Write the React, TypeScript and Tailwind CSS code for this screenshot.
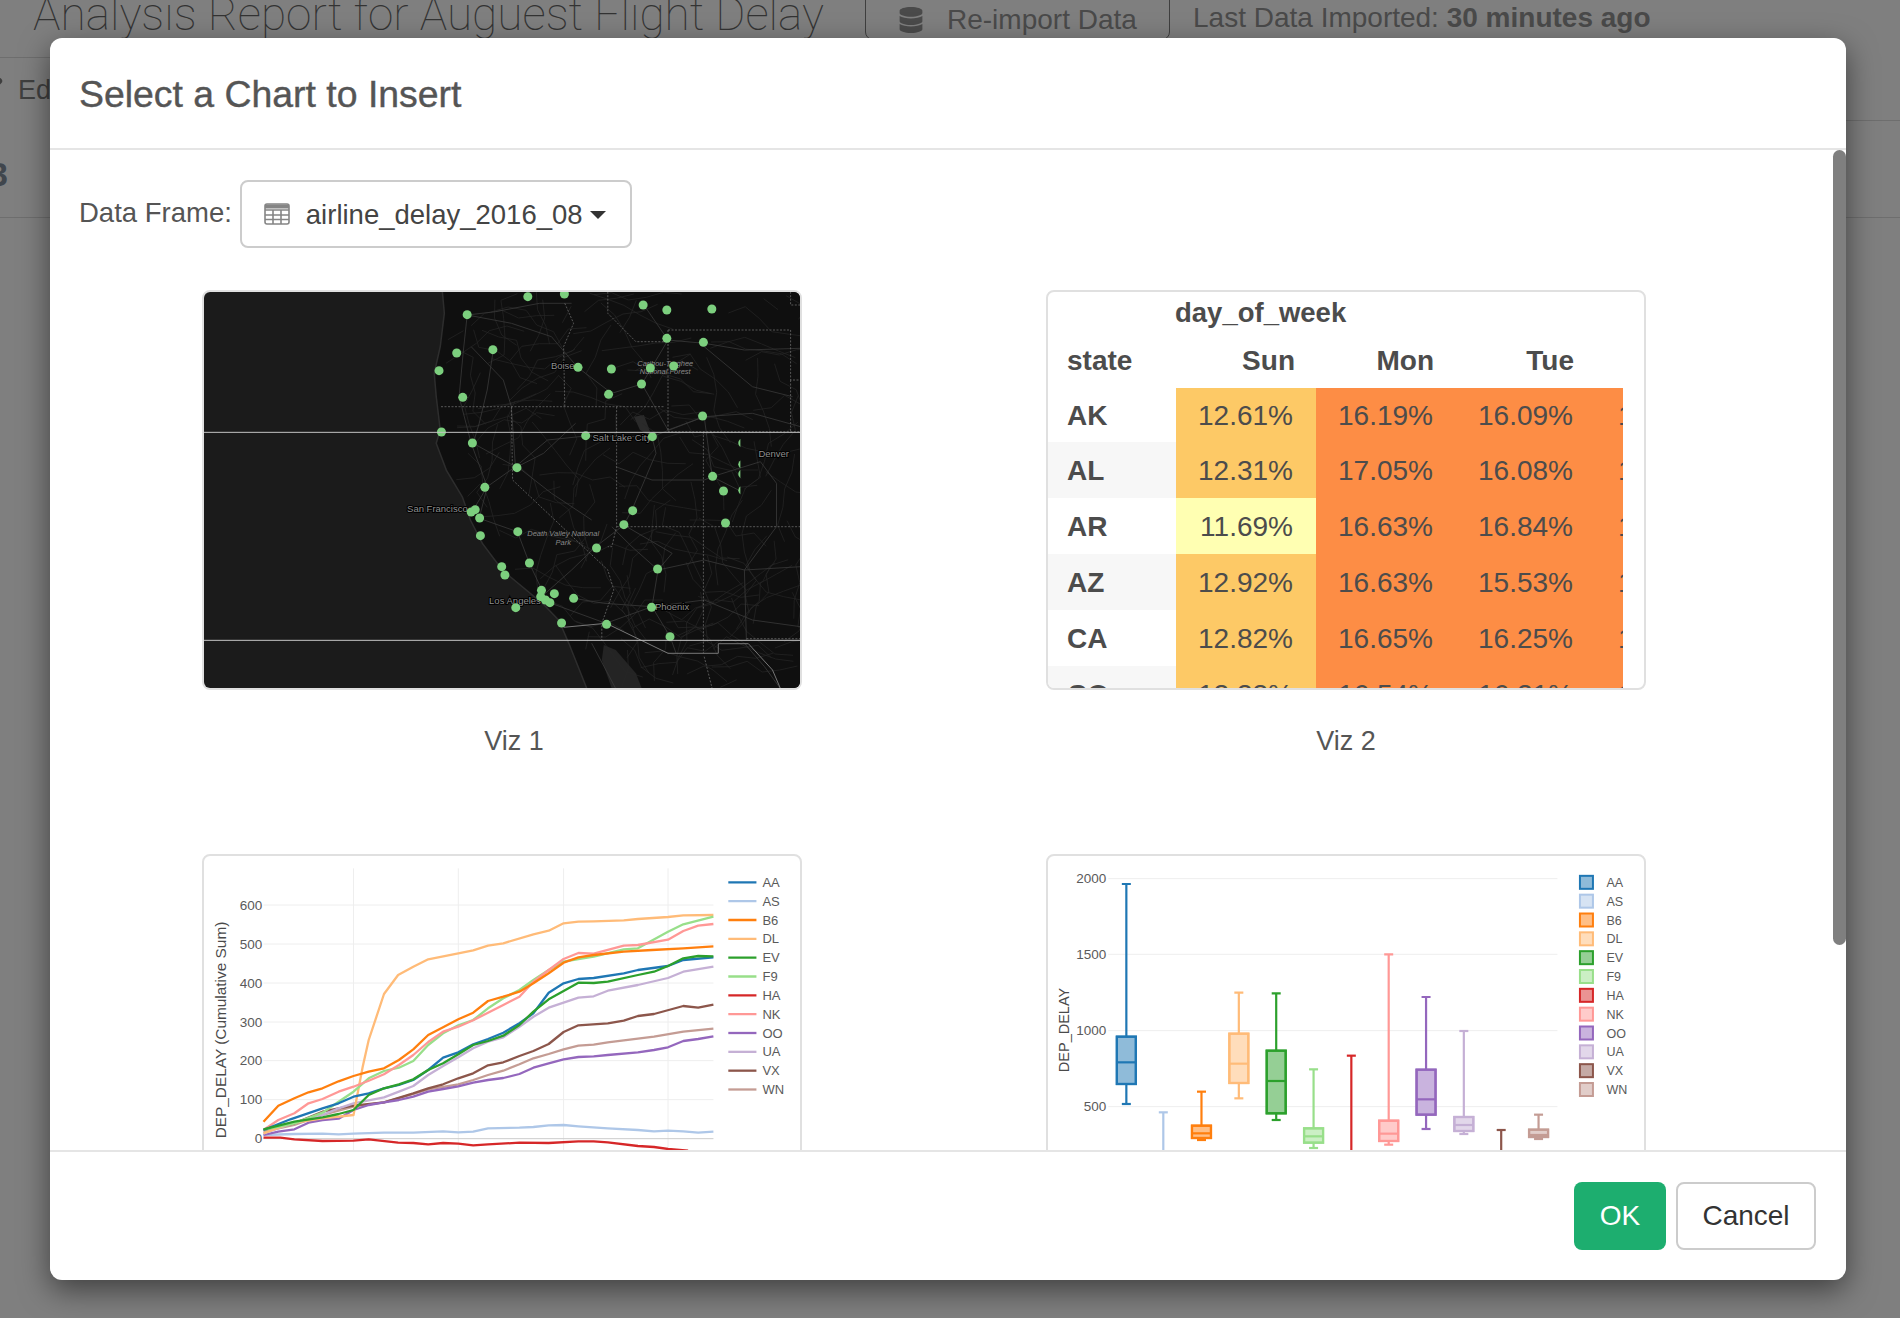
import { Pencil } from 'lucide-react'
import { FaDatabase } from 'react-icons/fa'

const SANS = 'font-["Liberation_Sans",Arial,sans-serif]'

const COLORS: Record<string, string> = {
  AA: '#1f77b4',
  AS: '#aec7e8',
  B6: '#ff7f0e',
  DL: '#ffbb78',
  EV: '#2ca02c',
  F9: '#98df8a',
  HA: '#d62728',
  NK: '#ff9896',
  OO: '#9467bd',
  UA: '#c5b0d5',
  VX: '#8c564b',
  WN: '#c49c94',
}
const CARRIERS = Object.keys(COLORS)

// chart data was read off a crop stretched 2.49x / 3x, scale it back here
const sx = (x: number, ox: number) => (x - ox) / 2.489
const sy = (y: number, oy: number) => (y - oy) / 3
const pts = (s: string, ox: number, oy: number) =>
  s
    .trim()
    .split(/\s+/)
    .map((p) => {
      const [x, y] = p.split(',').map(Number)
      return `${sx(x, ox).toFixed(1)},${sy(y, oy).toFixed(1)}`
    })
    .join(' ')

const MX = 35
const MY = 36

const COAST_PTS: [number, number][] = [
  [630, 34], [635, 100], [625, 200], [610, 280], [615, 350], [625, 450], [615, 490], [640, 570], [680, 650],
  [700, 720], [730, 790], [780, 870], [830, 920], [880, 970], [920, 1020], [945, 1090], [990, 1226],
]
const COAST = COAST_PTS.map((p) => p.join(',')).join(' ')

const coastX = (y: number) => {
  for (let i = 1; i < COAST_PTS.length; i++) {
    const [x0, y0] = COAST_PTS[i - 1]
    const [x1, y1] = COAST_PTS[i]
    if (y <= y1) return x0 + ((y - y0) / (y1 - y0)) * (x1 - x0)
  }
  return 990
}

// minor roads, just texture: small seeded walks over the land
function minorRoads() {
  let seed = 41
  const rnd = () => {
    seed = (seed * 16807) % 2147483647
    return seed / 2147483647
  }
  const out: string[] = []
  for (let i = 0; i < 150; i++) {
    const y0 = 40 + rnd() * 1180
    let x = coastX(y0) + 15 + rnd() * (1520 - coastX(y0))
    let y = y0
    const walk = [`${x.toFixed(0)},${y.toFixed(0)}`]
    const ang = rnd() * Math.PI * 2
    for (let j = 0; j < 5; j++) {
      const a = ang + (rnd() - 0.5) * 1.4
      x += Math.cos(a) * 45
      y += Math.sin(a) * 55
      if (x < coastX(Math.min(Math.max(y, 34), 1226)) + 8 || y < 34 || y > 1226) break
      walk.push(`${x.toFixed(0)},${y.toFixed(0)}`)
    }
    if (walk.length > 1) out.push(walk.join(' '))
  }
  return out
}
const MINOR = minorRoads()

const ROADS = [
  '690,105 760,95 870,70 950,70',
  '690,105 680,220 670,350 700,490 740,620 705,690',
  '755,210 740,330 720,430 705,490',
  '705,490 810,560 890,480 985,468 1150,470',
  '810,560 740,620 720,715 815,755 845,850 880,940',
  '690,105 800,130 900,170 935,220 965,262 1050,340 1125,312 1190,180 1130,75',
  '1150,470 1160,520 1100,690 1080,735 1010,800 950,870 880,945',
  '1150,470 1280,410 1400,400 1520,440',
  '1190,180 1280,190 1380,210 1520,205',
  '1125,312 1190,450 1280,410 1300,590 1365,630',
  '1300,590 1420,545 1460,610 1460,740 1380,870 1385,1080',
  '1150,980 1165,870 1280,840 1380,870 1520,860',
  '895,968 1035,1030 1150,980 1280,960 1400,1020 1520,1040',
  '955,955 1030,970 1150,980 1195,1070 1210,1120',
  '1165,870 1100,800 1050,740',
  '960,430 880,520 815,560 900,640 1000,720',
  '1280,200 1400,320 1500,350',
  '1060,560 1150,600 1280,600 1300,590',
  '1380,1090 1430,1160 1470,1226',
  '1080,735 1200,820 1165,870',
  '1000,1090 1060,1226',
  '700,200 780,300 800,380 810,560',
]

const BORDERS = [
  '625,380 1180,380',
  '933,70 955,130 930,200 933,380',
  '800,380 803,600 1040,870 1055,930 1025,1030 1025,1080',
  '1062,380 1062,740 1050,800 1040,800',
  '1190,150 1190,455 1520,455',
  '1190,150 1495,150 1495,300 1520,300',
  '1495,35 1495,75 1520,75',
  '1495,300 1495,455',
  '1062,740 1520,740',
  '1278,455 1278,1120',
  '1040,35 1040,100 1110,185 1190,185',
  '1385,1076 1520,1076',
  '1280,1130 1300,1226',
]

const DOTS = [
  '841,50', '932,42', '1128,75', '1187,90', '1299,87', '690,104', '1187,175', '1278,187', '754,209', '664,219',
  '620,272', '966,262', '1049,267', '1146,264', '1204,258', '1124,312', '1042,343', '679,352', '1276,408', '626,456',
  '985,467', '1151,470', '703,489', '814,563', '1301,589', '1328,633', '734,622', '1102,692', '1080,734', '1333,729',
  '710,689', '700,696', '721,714', '723,767', '816,755', '1012,804', '776,860', '784,885', '845,849', '1164,867',
  '875,931', '907,941', '873,950', '885,960', '896,968', '955,955', '811,983', '1149,982', '925,1029', '1037,1033', '1195,1070',
]
const EDGE_DOTS = ['1368,489', '1368,553', '1368,582', '1368,631']

function MapLabel({ x, y, children, italic }: { x: number; y: number; children: string; italic?: boolean }) {
  return (
    <text
      x={sx(x, MX)}
      y={sy(y, MY)}
      fill={italic ? '#8a8a8a' : '#8f8f8f'}
      fontSize={italic ? 7.5 : 9.5}
      fontStyle={italic ? 'italic' : 'normal'}
      fontFamily="Liberation Sans, sans-serif"
      textAnchor="middle"
      stroke="#000"
      strokeWidth={italic ? 0 : 2}
      paintOrder="stroke"
    >
      {children}
    </text>
  )
}

function MapViz() {
  const land = `${COAST} 1520,1226 1520,34`
  return (
    <svg className="block h-full w-full" viewBox="0 0 596 396">
      <rect width="596" height="396" fill="#1b1b1b" />
      <polyline points={pts(COAST, MX, MY)} fill="none" stroke="#3a3a3a" strokeWidth="3" opacity="0.6" />
      <polygon points={pts(land, MX, MY)} fill="#0f0f0f" />
      <polygon points={pts('1030,1095 1060,1110 1110,1180 1125,1226 1050,1226 1025,1140', MX, MY)} fill="#242424" />
      <polygon points={pts('1105,410 1130,405 1150,470 1120,450', MX, MY)} fill="#2a2a2a" />
      {MINOR.map((r, i) => (
        <polyline key={i} points={pts(r, MX, MY)} fill="none" stroke="#262626" strokeWidth="0.7" />
      ))}
      {ROADS.map((r, i) => (
        <polyline key={i} points={pts(r, MX, MY)} fill="none" stroke="#3a3a3a" strokeWidth="0.8" />
      ))}
      {BORDERS.map((b, i) => (
        <polyline key={i} points={pts(b, MX, MY)} fill="none" stroke="#6a6a6a" strokeWidth="0.8" strokeDasharray="2 1.5" />
      ))}
      <polyline
        points={pts('930,1042 1036,1030 1190,1120 1315,1120 1315,1091 1390,1091 1450,1170 1470,1226', MX, MY)}
        fill="none"
        stroke="#777"
        strokeWidth="1"
      />
      <MapLabel x={928} y={266}>Boise</MapLabel>
      <MapLabel x={1183} y={257} italic>Caribou-Targhee</MapLabel>
      <MapLabel x={1183} y={282} italic>National Forest</MapLabel>
      <MapLabel x={1075} y={482}>Salt Lake City</MapLabel>
      <MapLabel x={1453} y={532}>Denver</MapLabel>
      <MapLabel x={616} y={695}>San Francisco</MapLabel>
      <MapLabel x={929} y={769} italic>Death Valley National</MapLabel>
      <MapLabel x={929} y={794} italic>Park</MapLabel>
      <MapLabel x={809} y={972}>Los Angeles</MapLabel>
      <MapLabel x={1200} y={991}>Phoenix</MapLabel>
      {DOTS.map((d) => {
        const [x, y] = d.split(',').map(Number)
        return <circle key={d} cx={sx(x, MX)} cy={sy(y, MY)} r="4.5" fill="#7ccf7e" />
      })}
      <clipPath id="edge">
        <rect x="0" y="0" width={sx(1370, MX)} height="396" />
      </clipPath>
      <g clipPath="url(#edge)">
        {EDGE_DOTS.map((d) => {
          const [x, y] = d.split(',').map(Number)
          return <circle key={d} cx={sx(x + 8, MX)} cy={sy(y, MY)} r="4.5" fill="#7ccf7e" />
        })}
      </g>
      <line x1="0" x2="596" y1={sy(457, MY)} y2={sy(457, MY)} stroke="#c4c4c4" strokeWidth="1" />
      <line x1="0" x2="596" y1={sy(1081, MY)} y2={sy(1081, MY)} stroke="#c4c4c4" strokeWidth="1" />
    </svg>
  )
}

const HEAT = [
  { state: 'AK', v: ['12.61%', '16.19%', '16.09%'] },
  { state: 'AL', v: ['12.31%', '17.05%', '16.08%'] },
  { state: 'AR', v: ['11.69%', '16.63%', '16.84%'], low: true },
  { state: 'AZ', v: ['12.92%', '16.63%', '15.53%'] },
  { state: 'CA', v: ['12.82%', '16.65%', '16.25%'] },
  { state: 'CO', v: ['12.33%', '16.54%', '16.21%'] },
]

function PivotViz() {
  return (
    <div className={`h-full w-[575px] overflow-hidden text-[28px] text-[#4c4c4c] ${SANS}`}>
      <div className="h-[43px] pl-[127px] pt-[2px] text-[27.5px] font-bold leading-[38px]">day_of_week</div>
      <div className="grid h-[53px] grid-cols-[128px_140px_140px_140px_27px] items-center pb-[2px] font-bold leading-none">
        <span className="pl-[19px]">state</span>
        <span className="pr-[21px] text-right">Sun</span>
        <span className="pr-[22px] text-right">Mon</span>
        <span className="pr-[22px] text-right">Tue</span>
        <span />
      </div>
      {HEAT.map((row, i) => (
        <div
          key={row.state}
          className={`grid grid-cols-[128px_140px_140px_140px_27px] leading-none ${i === 0 ? 'h-[54px]' : 'h-[56px]'}`}
        >
          <div className={`flex items-center pl-[19px] pt-[1px] font-bold ${i % 2 === 1 ? 'bg-[#f7f7f7]' : 'bg-white'}`}>
            {row.state}
          </div>
          <div className={`flex items-center justify-end pr-[23px] pt-[1px] ${row.low ? 'bg-[#ffffb2]' : 'bg-[#fdc966]'}`}>
            {row.v[0]}
          </div>
          <div className="flex items-center justify-end bg-[#fd8d45] pr-[23px] pt-[1px]">{row.v[1]}</div>
          <div className="flex items-center justify-end bg-[#fd8d45] pr-[23px] pt-[1px]">{row.v[2]}</div>
          <div className="flex items-center overflow-hidden bg-[#fd8d45] pl-[22px] pt-[1px]">16.44%</div>
        </div>
      ))}
    </div>
  )
}

const LINES: Record<string, string> = {
  AS: '183,885 260,882 330,881 370,883 407,881 483,878 556,878 630,874 668,877 705,875 742,865 820,863 855,861 893,856 930,855 967,859 1040,865 1115,870 1155,874 1190,872 1228,874 1265,878 1303,875',
  HA: '183,893 225,893 260,898 330,903 407,902 445,898 518,908 556,909 593,913 630,909 668,911 705,916 742,913 820,908 893,909 967,904 1005,904 1040,907 1115,918 1155,921 1190,927 1240,932',
  WN: '183,875 260,855 330,825 407,800 483,787 556,762 593,748 668,733 705,720 742,705 780,692 820,673 855,655 893,642 930,628 967,617 1005,614 1040,607 1115,596 1155,590 1228,575 1303,566',
  VX: '183,870 260,850 330,815 370,805 407,797 483,787 556,760 593,745 630,733 668,715 705,700 742,676 780,667 820,648 855,633 893,612 930,576 967,556 1040,550 1080,542 1115,528 1155,522 1228,498 1265,503 1303,494',
  OO: '183,885 220,875 260,868 295,848 330,840 370,836 407,810 445,795 483,787 520,780 556,770 593,755 630,747 668,739 705,728 742,720 780,714 820,702 855,683 893,670 930,658 967,651 1005,649 1040,645 1115,637 1155,630 1190,622 1228,603 1265,597 1303,589',
  UA: '183,880 260,848 330,825 370,805 407,790 483,772 520,755 556,738 593,705 630,678 668,652 705,625 742,605 780,592 820,560 855,530 893,503 930,488 967,473 1005,469 1040,452 1115,435 1190,414 1228,395 1303,380',
  DL: '183,880 250,850 330,835 407,825 430,680 445,600 483,462 518,405 556,380 593,358 668,340 705,331 742,317 780,310 855,283 893,272 930,250 967,245 1005,244 1080,241 1115,237 1190,231 1228,226 1303,225',
  F9: '183,870 260,850 330,818 370,785 407,755 445,715 483,693 520,683 556,663 593,615 630,580 668,556 705,540 742,505 780,475 820,450 855,420 893,390 930,365 967,357 1005,350 1080,328 1115,325 1190,275 1228,253 1303,230',
  NK: '183,870 220,840 260,820 295,790 330,777 370,755 407,740 445,722 483,703 520,675 556,645 593,606 630,575 668,560 705,541 742,518 780,495 820,470 855,425 893,390 930,357 967,339 1005,341 1080,317 1115,315 1190,299 1228,273 1265,257 1303,252',
  AA: '183,870 250,838 330,805 370,790 407,770 445,760 483,745 520,735 556,720 593,690 630,653 668,637 705,613 742,597 780,578 820,550 855,520 893,458 930,430 967,417 1005,414 1080,400 1115,390 1190,378 1228,360 1303,352',
  EV: '183,868 260,845 330,832 370,822 407,810 445,765 483,745 520,733 556,718 593,690 630,670 668,643 705,615 742,603 780,587 820,555 855,515 893,478 930,453 967,428 1005,429 1040,425 1115,405 1155,395 1190,378 1228,355 1265,348 1303,349',
  B6: '183,845 220,797 260,775 295,757 330,745 370,724 407,708 445,695 483,685 520,660 556,628 593,585 630,562 668,538 705,518 742,483 780,470 820,455 855,430 893,400 930,368 967,352 1005,345 1080,335 1150,330 1228,325 1303,319',
}

const AXIS_TEXT = '#5a5a5a'

function LineViz() {
  const ox = 35
  const oy = 48
  return (
    <svg className="block h-full w-full" viewBox="0 0 596 396" fontFamily="Liberation Sans, sans-serif">
      {[407, 668, 930, 1190].map((x) => (
        <line key={x} x1={sx(x, ox)} x2={sx(x, ox)} y1={sy(85, oy)} y2={sy(932, oy)} stroke="#eee" />
      ))}
      {[
        ['600', 195],
        ['500', 312],
        ['400', 429],
        ['300', 546],
        ['200', 662],
        ['100', 779],
        ['0', 896],
      ].map(([t, y]) => (
        <g key={t}>
          <line
            x1={sx(183, ox)}
            x2={sx(1303, ox)}
            y1={sy(Number(y), oy)}
            y2={sy(Number(y), oy)}
            stroke={t === '0' ? '#ccc' : '#eee'}
          />
          <text x={sx(180, ox)} y={sy(Number(y), oy) + 4.5} textAnchor="end" fontSize="13.5" fill={AXIS_TEXT}>
            {t}
          </text>
        </g>
      ))}
      <text
        transform={`translate(${sx(90, ox)} ${sy(570, oy)}) rotate(-90)`}
        textAnchor="middle"
        fontSize="15.4"
        fill="#4a4a4a"
      >
        DEP_DELAY (Cumulative Sum)
      </text>
      {Object.entries(LINES).map(([k, s]) => (
        <polyline key={k} points={pts(s, ox, oy)} fill="none" stroke={COLORS[k]} strokeWidth="2.3" strokeLinejoin="round" />
      ))}
      {CARRIERS.map((k, i) => {
        const y = sy(127 + 56.5 * i, oy)
        return (
          <g key={k}>
            <line x1={sx(1340, ox)} x2={sx(1410, ox)} y1={y} y2={y} stroke={COLORS[k]} strokeWidth="2.3" />
            <text x={sx(1425, ox)} y={y + 4.5} fontSize="13" fill={AXIS_TEXT}>
              {k}
            </text>
          </g>
        )
      })}
    </svg>
  )
}

// x, whisker top, q3, median, q1, whisker bottom (0 = box runs out of sight)
const BOXES: [string, number, number, number, number, number, number][] = [
  ['AA', 240, 132, 590, 667, 732, 792],
  ['AS', 332, 817, 0, 0, 0, 1100],
  ['B6', 427, 755, 857, 880, 894, 900],
  ['DL', 520, 458, 581, 671, 729, 775],
  ['EV', 613, 460, 632, 723, 820, 840],
  ['F9', 706, 688, 865, 889, 908, 924],
  ['HA', 800, 647, 0, 0, 0, 1100],
  ['NK', 893, 343, 842, 881, 903, 914],
  ['OO', 986, 471, 689, 778, 824, 867],
  ['UA', 1080, 573, 831, 855, 873, 882],
  ['VX', 1173, 870, 0, 0, 0, 1100],
  ['WN', 1266, 824, 869, 885, 891, 897],
]

function BoxViz() {
  const ox = 45
  const oy = 48
  return (
    <svg className="block h-full w-full" viewBox="0 0 596 396" fontFamily="Liberation Sans, sans-serif">
      {[
        ['2000', 116],
        ['1500', 343],
        ['1000', 572],
        ['500', 800],
      ].map(([t, y]) => (
        <g key={t}>
          <line x1={sx(195, ox)} x2={sx(1313, ox)} y1={sy(Number(y), oy)} y2={sy(Number(y), oy)} stroke="#eee" />
          <text x={sx(190, ox)} y={sy(Number(y), oy) + 4.5} textAnchor="end" fontSize="13.5" fill={AXIS_TEXT}>
            {t}
          </text>
        </g>
      ))}
      <text
        transform={`translate(${sx(97, ox)} ${sy(570, oy)}) rotate(-90)`}
        textAnchor="middle"
        fontSize="14.5"
        fill="#4a4a4a"
      >
        DEP_DELAY
      </text>
      {BOXES.map(([k, x, top, q3, med, q1, low]) => {
        const c = COLORS[k]
        const cx = sx(x, ox)
        const w = 9.5
        return (
          <g key={k} stroke={c} strokeWidth="2.2" fill="none">
            <line x1={cx} x2={cx} y1={sy(top, oy)} y2={sy(low, oy)} />
            <line x1={cx - 4.5} x2={cx + 4.5} y1={sy(top, oy)} y2={sy(top, oy)} />
            {q3 > 0 && (
              <>
                <line x1={cx - 4.5} x2={cx + 4.5} y1={sy(low, oy)} y2={sy(low, oy)} />
                <rect x={cx - w} y={sy(q3, oy)} width={w * 2} height={(q1 - q3) / 3} fill="#fff" />
                <rect x={cx - w} y={sy(q3, oy)} width={w * 2} height={(q1 - q3) / 3} fill={c} fillOpacity="0.5" />
                <line x1={cx - w} x2={cx + w} y1={sy(med, oy)} y2={sy(med, oy)} />
              </>
            )}
          </g>
        )
      })}
      {CARRIERS.map((k, i) => {
        const y = sy(127 + 56.5 * i, oy)
        return (
          <g key={k}>
            <rect
              x={sx(1369, ox)}
              y={y - 6.5}
              width="13"
              height="13"
              fill={COLORS[k]}
              fillOpacity="0.5"
              stroke={COLORS[k]}
              strokeWidth="2"
            />
            <text x={sx(1435, ox)} y={y + 4.5} fontSize="12.5" fill={AXIS_TEXT}>
              {k}
            </text>
          </g>
        )
      })}
    </svg>
  )
}

function VizCard({ label, children, shift }: { label: string; children: React.ReactNode; shift?: boolean }) {
  return (
    <div>
      <div className="h-[400px] w-[600px] overflow-hidden rounded-[8px] border-2 border-[#e0e0e0]">{children}</div>
      <div
        className={`h-[164px] pt-[35px] text-center text-[27px] leading-[32px] text-[#555] ${shift ? 'pl-[24px]' : ''}`}
      >
        {label}
      </div>
    </div>
  )
}

function TableIcon() {
  return (
    <svg width="26" height="22" viewBox="0 0 26 22" fill="none" stroke="#858585" strokeWidth="1.6">
      <rect x="1" y="1" width="24" height="20" rx="2" />
      <path d="M1 7h24M1 12h24M1 16.5h24M9 7v14M17 7v14" />
      <path d="M1 3.5h24" strokeWidth="4" />
    </svg>
  )
}

export default function App() {
  return (
    <div className={`relative h-[1318px] w-[1900px] overflow-hidden bg-[#7f7f7f] text-[#3f3f3f] ${SANS}`}>
      {/* page behind the dialog */}
      <div className="flex h-[57px] items-start overflow-hidden">
        <h1 className='ml-[33px] mt-[-16px] w-[793px] font-["Roboto",sans-serif] text-[46px] font-thin leading-[60px] whitespace-nowrap text-[#333]'>
          Analysis Report for Auguest Flight Delay
        </h1>
        <div className="ml-[39px] mt-[-14px] flex h-[54px] w-[305px] items-center gap-[23px] rounded-[8px] border border-[#3f3f3f] pl-[32px] pt-[14px] text-[28px] text-[#4a4a4a]">
          <FaDatabase size={26} color="#4a4a4a" />
          Re-import Data
        </div>
        <div className="ml-[23px] whitespace-nowrap text-[28px] leading-[36px] text-[#4a4a4a]">
          Last Data Imported: <b>30 minutes ago</b>
        </div>
      </div>
      <div className="flex h-[161px] border-b border-[#6e6e6e]">
        <div className="w-[50px] overflow-hidden border-t border-[#6e6e6e]">
          <div className="flex h-[64px] items-start pt-[16px] text-[27px] leading-[32px]">
            <Pencil size={20} className="ml-[-17px] mr-[15px] mt-[3px] shrink-0" fill="#3f3f3f" />
            Ed
          </div>
          <div className="ml-[-11px] pt-[34px] text-[34px] font-bold leading-[36px] text-[#40464d]">3</div>
        </div>
        <div className="h-[64px] flex-1 border-b border-[#6e6e6e]" />
      </div>

      {/* dialog */}
      <div className="absolute left-[50px] top-[38px] flex h-[1242px] w-[1796px] flex-col overflow-hidden rounded-[12px] bg-white shadow-[0_10px_30px_rgba(0,0,0,0.5)]">
        <div className="flex h-[112px] shrink-0 items-center border-b-2 border-[#e5e5e5] pl-[29px]">
          <h2 className="mt-[2px] text-[37.4px] leading-[40px] text-[#555] [-webkit-text-stroke:0.4px_#555]">
            Select a Chart to Insert
          </h2>
        </div>

        <div className="relative min-h-0 flex-1 overflow-hidden">
          <div className="flex items-center pl-[29px] pt-[30px]">
            <span className="mt-[-2px] text-[27.5px] text-[#555]">Data Frame:</span>
            <div className="ml-[8px] flex h-[68px] w-[392px] items-center rounded-[8px] border-2 border-[#ccc] pl-[22px]">
              <TableIcon />
              <span className="ml-[16px] mt-[2px] text-[27.5px] text-[#444]">airline_delay_2016_08</span>
              <span className="ml-[7px] mt-[2px] h-0 w-0 border-x-[8px] border-t-[8px] border-x-transparent border-t-[#333]" />
            </div>
          </div>

          <div className="grid grid-cols-[600px_600px] gap-x-[244px] pl-[152px] pt-[42px]">
            <VizCard label="Viz 1" shift>
              <MapViz />
            </VizCard>
            <VizCard label="Viz 2">
              <PivotViz />
            </VizCard>
            <VizCard label="Viz 3">
              <LineViz />
            </VizCard>
            <VizCard label="Viz 4">
              <BoxViz />
            </VizCard>
          </div>

          <div className="absolute right-0 top-0 h-[795px] w-[13px] rounded-full bg-[#7f7f7f]" />
        </div>

        <div className="flex h-[130px] shrink-0 items-start justify-end gap-[10px] border-t-2 border-[#e5e5e5] pr-[30px] pt-[30px]">
          <button className="h-[68px] w-[92px] rounded-[8px] bg-[#1dae6f] text-[28px] text-white">OK</button>
          <button className="h-[68px] w-[140px] rounded-[8px] border-2 border-[#ccc] bg-white text-[28px] text-[#333]">
            Cancel
          </button>
        </div>
      </div>
    </div>
  )
}
